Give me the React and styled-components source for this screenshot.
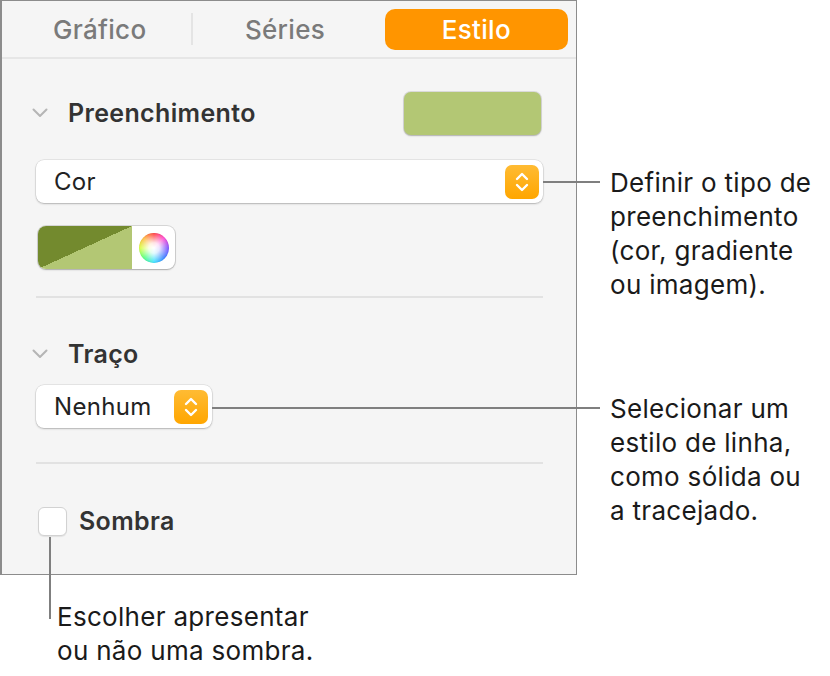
import React from "react";
import styled, { createGlobalStyle } from "styled-components";

const GlobalStyle = createGlobalStyle`
  html, body {
    margin: 0;
    padding: 0;
    background: #ffffff;
  }
  body {
    font-family: Inter, "Noto Sans", "Liberation Sans", sans-serif;
    -webkit-font-smoothing: antialiased;
  }
`;

const Page = styled.div`
  position: relative;
  width: 830px;
  height: 676px;
  overflow: hidden;
  background: #fff;
`;

const Panel = styled.div`
  box-sizing: border-box;
  width: 577px;
  height: 575px;
  border: 1px solid #8c8c8c;
  border-left-width: 2px;
  background: #f5f5f5;
  display: flex;
  flex-direction: column;
`;

const TabBar = styled.div`
  display: flex;
  align-items: center;
  height: 58px;
  padding: 0 8px 0 6px;
  border-bottom: 2px solid #e6e6e6;
  box-sizing: border-box;
`;

const Tab = styled.div`
  flex: 1;
  height: 41px;
  border-radius: 10px;
  display: flex;
  align-items: center;
  justify-content: center;
  font-size: 26px;
  font-weight: ${(p) => (p.$active ? 500 : 450)};
  letter-spacing: 0.3px;
  color: ${(p) => (p.$active ? "#ffffff" : "#7a7a7a")};
  background: ${(p) => (p.$active ? "#ff9500" : "transparent")};
  margin-left: ${(p) => (p.$active ? "8px" : "0")};
`;

const TabDivider = styled.div`
  width: 2px;
  height: 32px;
  background: #e4e4e4;
`;

const Content = styled.div`
  display: flex;
  flex-direction: column;
  padding: 0 33px 0 34px;
`;

const SectionHeader = styled.div`
  display: flex;
  align-items: center;
  height: ${(p) => p.$height || 44}px;
  margin-top: ${(p) => p.$top || 0}px;
`;

const Chevron = styled.svg`
  width: 16px;
  height: 10px;
  margin-left: -4px;
  margin-right: 20px;
  flex-shrink: 0;
`;

const SectionTitle = styled.span`
  flex: 1;
  font-size: 25px;
  font-weight: 600;
  letter-spacing: 0.35px;
  color: #333333;
`;

const Swatch = styled.div`
  width: 137px;
  height: 43px;
  box-sizing: border-box;
  border-radius: 7px;
  background: ${(p) => p.$color};
  box-shadow: 0 0 0 1px rgba(0, 0, 0, 0.1), 0 1px 2px rgba(0, 0, 0, 0.2);
  margin-right: 2px;
`;

const Select = styled.div`
  box-sizing: border-box;
  width: ${(p) => (p.$width ? `${p.$width}px` : "100%")};
  height: 43px;
  margin-top: ${(p) => p.$top || 0}px;
  background: #ffffff;
  border-radius: 8px;
  box-shadow: 0 0 0 0.5px rgba(0, 0, 0, 0.12), 0 1px 2px rgba(0, 0, 0, 0.22);
  display: flex;
  align-items: center;
  justify-content: space-between;
  padding: 0 4px 0 18px;
  font-size: 24px;
  letter-spacing: 0.3px;
  color: #222222;
`;

const Stepper = styled.div`
  width: 34px;
  height: 34px;
  border-radius: 7px;
  background: linear-gradient(#ffbb33, #ffa600);
  display: flex;
  align-items: center;
  justify-content: center;
`;

const ColorWell = styled.div`
  display: flex;
  width: 137px;
  height: 43px;
  margin-top: 23px;
  margin-left: 2px;
  border-radius: 8px;
  overflow: hidden;
  background: #ffffff;
  box-shadow: 0 0 0 1px rgba(0, 0, 0, 0.12), 0 1px 2px rgba(0, 0, 0, 0.2);
`;

const WellSplit = styled.div`
  width: 94px;
  height: 100%;
  background: linear-gradient(to bottom right, #738a2e 50%, #b3c774 50%);
`;

const WellWheelArea = styled.div`
  flex: 1;
  display: flex;
  align-items: center;
  justify-content: center;
`;

const Wheel = styled.div`
  width: 30px;
  height: 30px;
  border-radius: 50%;
  background: radial-gradient(circle, #ffffff 0%, rgba(255, 255, 255, 0.85) 25%, rgba(255, 255, 255, 0) 72%),
    conic-gradient(#ff3b3b, #ff40d0, #7a4dff, #2f7bff, #33e0ff, #4dff7a, #d9ff3b, #ffb43b, #ff3b3b);
  box-shadow: inset 0 0 1px rgba(0, 0, 0, 0.2);
`;

const Divider = styled.div`
  height: 2px;
  background: #e2e2e2;
  margin-top: ${(p) => p.$top}px;
`;

const CheckRow = styled.div`
  display: flex;
  align-items: center;
  margin-top: 42px;
`;

const Checkbox = styled.div`
  width: 29px;
  height: 29px;
  box-sizing: border-box;
  margin-left: 2px;
  border-radius: 6px;
  background: #ffffff;
  border: 1px solid #d2d2d2;
  box-shadow: 0 1px 1px rgba(0, 0, 0, 0.08);
`;

const CheckLabel = styled.span`
  margin-left: 12px;
  font-size: 25px;
  font-weight: 600;
  letter-spacing: 0.35px;
  color: #333333;
`;

const Leader = styled.div`
  position: absolute;
  background: #7f7f7f;
  left: ${(p) => p.$x}px;
  top: ${(p) => p.$y}px;
  width: ${(p) => p.$w}px;
  height: ${(p) => p.$h}px;
`;

const Callout = styled.div`
  position: absolute;
  left: ${(p) => p.$x}px;
  top: ${(p) => p.$y}px;
  font-size: 26px;
  line-height: 34px;
  letter-spacing: 0.3px;
  color: #1a1a1a;
  white-space: nowrap;
`;

const DisclosureIcon = () => (
  <Chevron viewBox="0 0 16 10">
    <path d="M1.5 1.5 L8 8 L14.5 1.5" fill="none" stroke="#b5b5b5" strokeWidth="2" strokeLinecap="round" strokeLinejoin="round" />
  </Chevron>
);

const StepperIcon = () => (
  <Stepper>
    <svg width="16" height="24" viewBox="0 0 16 24">
      <path d="M3 9 L8 4 L13 9 M3 15 L8 20 L13 15" fill="none" stroke="#ffffff" strokeWidth="2.4" strokeLinecap="round" strokeLinejoin="round" />
    </svg>
  </Stepper>
);

export default function App() {
  return (
    <Page>
      <GlobalStyle />
      <Panel>
        <TabBar>
          <Tab>Gráfico</Tab>
          <TabDivider />
          <Tab>Séries</Tab>
          <Tab $active>Estilo</Tab>
        </TabBar>
        <Content>
          <SectionHeader $top={32}>
            <DisclosureIcon />
            <SectionTitle>Preenchimento</SectionTitle>
            <Swatch $color="#b3c774" />
          </SectionHeader>
          <Select $top={25}>
            <span>Cor</span>
            <StepperIcon />
          </Select>
          <ColorWell>
            <WellSplit />
            <WellWheelArea>
              <Wheel />
            </WellWheelArea>
          </ColorWell>
          <Divider $top={27} />
          <SectionHeader $top={40} $height={32}>
            <DisclosureIcon />
            <SectionTitle>Traço</SectionTitle>
          </SectionHeader>
          <Select $top={15} $width={176}>
            <span>Nenhum</span>
            <StepperIcon />
          </Select>
          <Divider $top={34} />
          <CheckRow>
            <Checkbox />
            <CheckLabel>Sombra</CheckLabel>
          </CheckRow>
        </Content>
      </Panel>

      <Leader $x={543} $y={181} $w={57} $h={2} />
      <Callout $x={610} $y={166}>
        Definir o tipo de
        <br />
        preenchimento
        <br />
        (cor, gradiente
        <br />
        ou imagem).
      </Callout>

      <Leader $x={212} $y={407} $w={388} $h={2} />
      <Callout $x={610} $y={392}>
        Selecionar um
        <br />
        estilo de linha,
        <br />
        como sólida ou
        <br />a tracejado.
      </Callout>

      <Leader $x={49} $y={537} $w={2} $h={82} />
      <Callout $x={57} $y={600}>
        Escolher apresentar
        <br />
        ou não uma sombra.
      </Callout>
    </Page>
  );
}
